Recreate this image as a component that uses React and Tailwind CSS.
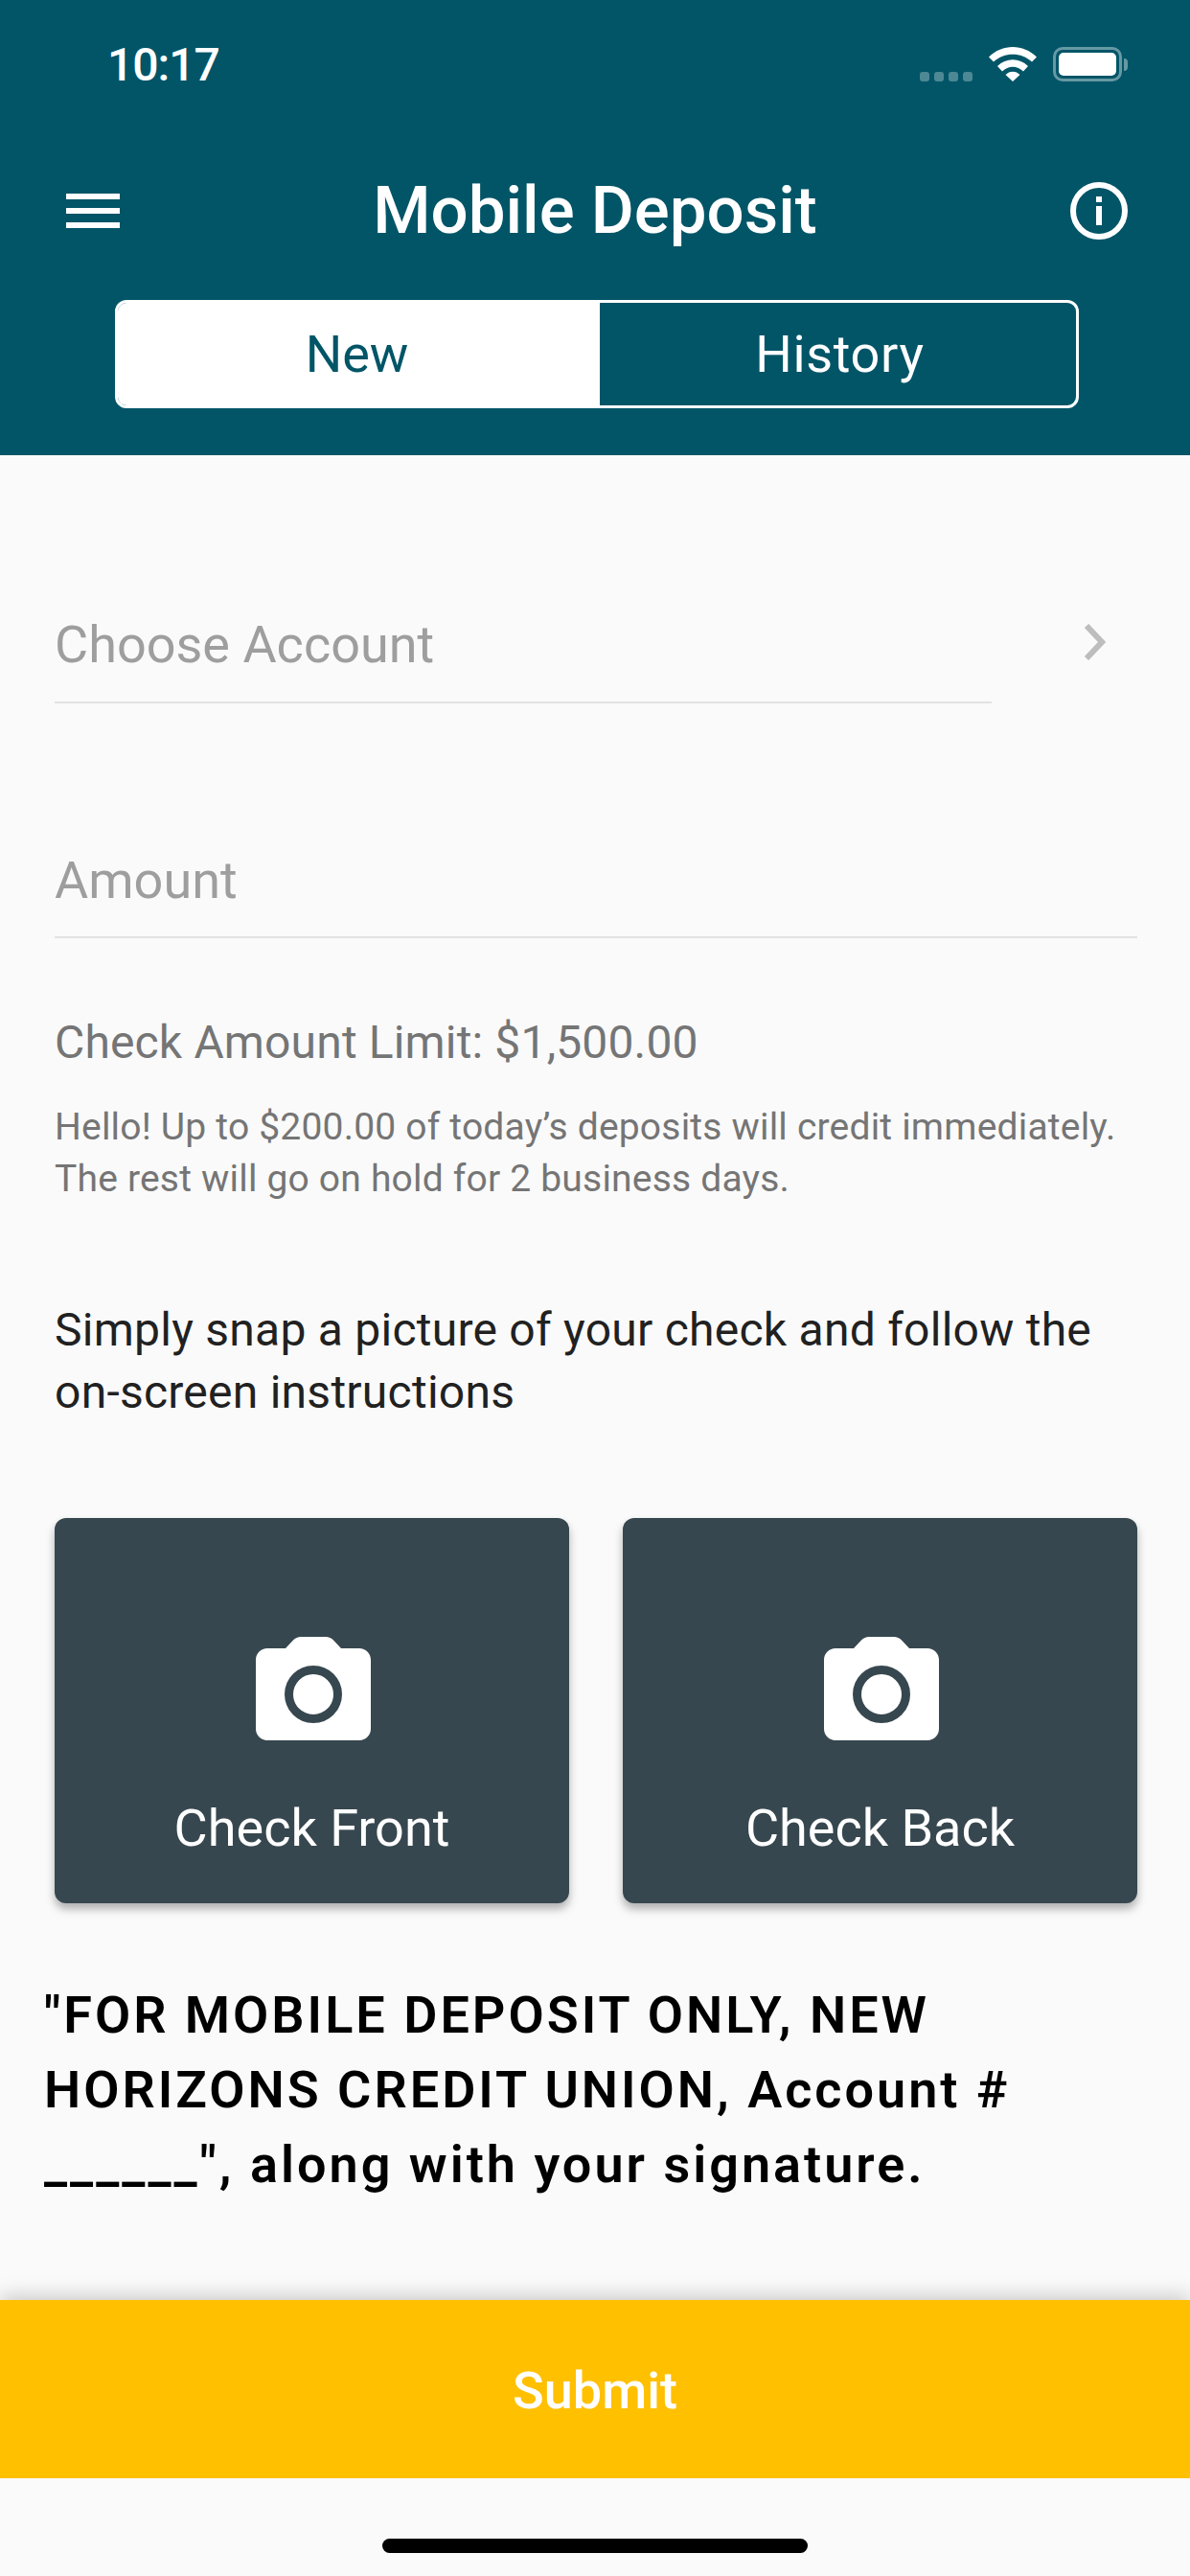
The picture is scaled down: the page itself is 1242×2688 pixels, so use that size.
const CameraIcon = () => (
  <svg width="120" height="108" viewBox="0 0 120 108" fill="none" className="ml-[2px]">
    <path
      d="M12 12H31L39 3.500C41 1.200 44 0 47 0H73C76 0 79 1.200 81 3.500L89 12H108C114.600 12 120 17.400 120 24V96C120 102.600 114.600 108 108 108H12C5.400 108 0 102.600 0 96V24C0 17.400 5.400 12 12 12Z"
      fill="white"
    />
    <circle cx="60" cy="60" r="25.500" stroke="#37474f" strokeWidth="9" fill="white" />
  </svg>
)

const StatusBar = () => (
  <div className="flex h-[175px] items-start justify-between pl-[112px] pr-[65px] pt-[43px]">
    <span className="text-[48px] leading-[50px] font-medium tracking-[-1px] text-white">10:17</span>
    <div className="flex items-start pt-[6px]">
      <div className="mt-[26px] mr-[17px] flex gap-[5px]">
        <span className="h-[10px] w-[10px] rounded-[3px] bg-white/30" />
        <span className="h-[10px] w-[10px] rounded-[3px] bg-white/30" />
        <span className="h-[10px] w-[10px] rounded-[3px] bg-white/30" />
        <span className="h-[10px] w-[10px] rounded-[3px] bg-white/30" />
      </div>
      <svg width="50" height="36" viewBox="0 0 50 36" className="mr-[17px]">
        <path d="M0 10.500C14 -3.500 36 -3.500 50 10.500L45 15.500C34 5 16 5 5 15.500Z" fill="white" />
        <path d="M9 20C18 11 32 11 41 20L36 25.500C29.500 19 20.500 19 14 25.500Z" fill="white" />
        <path d="M17.500 29C21.500 24.500 28.500 24.500 32.500 29L25 36Z" fill="white" />
      </svg>
      <div className="h-[36px] w-[72px] rounded-[10px] border-[3px] border-white/40 p-[3px]">
        <div className="h-full w-full rounded-[5px] bg-white" />
      </div>
      <span className="mt-[12px] ml-[2px] h-[13px] w-[4px] rounded-r-full bg-white/40" />
    </div>
  </div>
)

const Header = () => (
  <header className="bg-[#015567] pb-[49px]">
    <StatusBar />
    <div className="flex h-[90px] items-center justify-between pl-[69px] pr-[65px]">
      <div className="flex w-[56px] flex-col gap-[9px]">
        <span className="h-[6px] bg-white" />
        <span className="h-[6px] bg-white" />
        <span className="h-[6px] bg-white" />
      </div>
      <h1 className="text-[69px] leading-[90px] font-medium text-white">Mobile Deposit</h1>
      <svg width="60" height="60" viewBox="0 0 60 60" fill="none">
        <circle cx="30" cy="30" r="27" stroke="white" strokeWidth="6" />
        <rect x="27" y="15" width="6" height="6" fill="white" />
        <rect x="27" y="25" width="6" height="20" fill="white" />
      </svg>
    </div>
    <div className="ml-[120px] mr-[116px] mt-[48px] flex h-[113px] overflow-hidden rounded-[12px] border-[3px] border-white text-[54px]">
      <div className="flex w-[503px] items-center justify-center bg-white pr-[4px] text-[#015567]">New</div>
      <div className="flex flex-1 items-center justify-center pl-[4px] tracking-[0.7px] text-white">History</div>
    </div>
  </header>
)

const CheckCard = ({ label }) => (
  <div className="flex h-[402px] flex-1 flex-col items-center rounded-[12px] bg-[#37474f] pt-[124px] shadow-[0_6px_10px_rgba(0,0,0,0.3)]">
    <CameraIcon />
    <span className="mt-[57px] text-[54px] leading-[70px] text-white">{label}</span>
  </div>
)

export default function App() {
  return (
    <div className="flex h-[2688px] flex-col bg-[#fafafa] font-['Roboto',sans-serif]">
      <Header />

      <main className="flex-1 pl-[57px] pr-[55px]">
        <div className="mt-[163px] flex items-start">
          <div className="h-[96px] w-[978px] border-b-2 border-[#e2e2e2] text-[54px] leading-[70px] text-[#9e9e9e]">
            Choose Account
          </div>
          <svg width="24" height="38" viewBox="0 0 24 38" fill="none" className="mt-[13px] ml-[95px]">
            <path d="M4 2L20 19L4 36" stroke="#bdbdbd" strokeWidth="6" />
          </svg>
        </div>

        <div className="mt-[149px] h-[96px] border-b-2 border-[#e2e2e2] text-[54px] leading-[71px] text-[#9e9e9e]">
          Amount
        </div>

        <p className="mt-[77px] text-[48px] leading-[64px] tracking-[0.15px] text-[#757575]">Check Amount Limit: $1,500.00</p>
        <p className="mt-[29px] text-[39px] leading-[54px] tracking-[0.2px] text-[#757575]">
          Hello! Up to $200.00 of today’s deposits will credit immediately.
          <br />
          The rest will go on hold for 2 business days.
        </p>

        <p className="mt-[98px] text-[48px] leading-[65px] tracking-[0.25px] text-[#212121]">
          Simply snap a picture of your check and follow the
          <br />
          on-screen instructions
        </p>

        <div className="mt-[99px] flex gap-[56px]">
          <CheckCard label="Check Front" />
          <CheckCard label="Check Back" />
        </div>

        <p className="-ml-[11px] mt-[78px] text-[54px] leading-[78px] font-semibold tracking-[3px] text-black">
          ″FOR MOBILE DEPOSIT ONLY, NEW
          <br />
          HORIZONS CREDIT UNION, Account #
          <br />
          ______″, along with your signature.
        </p>
      </main>

      <button className="h-[186px] w-full bg-[#ffc000] pt-[2px] text-[54px] font-medium text-white shadow-[0_-4px_20px_rgba(0,0,0,0.2)]">
        Submit
      </button>
      <div className="flex h-[102px] justify-center bg-[#fafafa] pt-[63px]">
        <span className="h-[15px] w-[444px] rounded-full bg-black" />
      </div>
    </div>
  )
}
